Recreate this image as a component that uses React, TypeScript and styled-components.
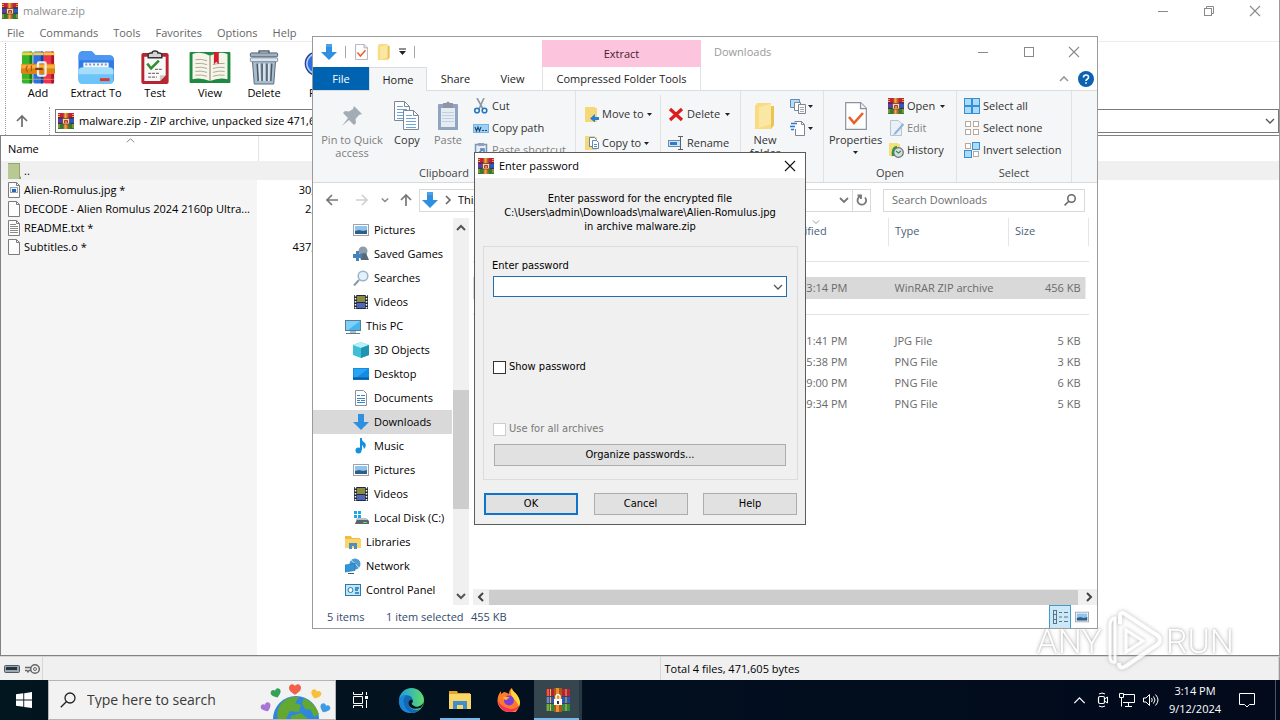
import React from "react";
import styled, { createGlobalStyle, css } from "styled-components";

const Global = createGlobalStyle`
  *, *::before, *::after { box-sizing: border-box; }
  html, body, #root { height: 100%; }
  body { margin: 0; overflow: hidden; background: #fff; color: #000;
    font: 11px/16px "Open Sans", "Noto Sans", sans-serif; }
  button { font: inherit; color: inherit; background: none; border: 0; padding: 0; margin: 0; }
  input { font: inherit; color: inherit; margin: 0; }
  svg { display: block; flex: none; }
  table { border-collapse: collapse; border-spacing: 0; table-layout: fixed; }
  th, td { padding: 0; font-weight: 400; text-align: left; white-space: nowrap; }
`;

/* ---------- icons ---------- */

const Svg = ({ w = 16, h = 16, box, children }: { w?: number; h?: number; box?: string; children: React.ReactNode }) => (
  <svg width={w} height={h} viewBox={box ?? `0 0 ${w} ${h}`} fill="none" aria-hidden="true">{children}</svg>
);

const RarIcon = ({ size = 16 }: { size?: number }) => (
  <Svg w={size} h={size} box="0 0 16 16">
    <rect x="0" y="0" width="16" height="5" fill="#c3223c" />
    <rect x="0" y="5" width="16" height="5.5" fill="#5a3fa0" />
    <rect x="0" y="10.5" width="16" height="5.5" fill="#2e7d32" />
    <rect x="10" y="5" width="6" height="5" fill="#2f58c4" />
    <path d="M0 5h16M0 10.4h16" stroke="#231a2c" strokeWidth=".8" />
    <path d="M0 1.5h2M0 3.5h2M14 1.5h2M14 3.5h2M0 12h2M0 14h2M14 12h2M14 14h2" stroke="#e8b23c" strokeWidth=".9" />
    <rect x="5.5" y="0" width="5" height="16" fill="#c2641c" />
    <rect x="6.5" y="0" width="2" height="16" fill="#eda84a" />
    <rect x="4.5" y="5.5" width="7" height="5.5" rx="1" fill="#e6d9cf" stroke="#7a3a12" strokeWidth=".8" />
    <path d="M6.5 10V7.5h3V10M8 7v3" stroke="#b33a1a" strokeWidth="1" />
  </Svg>
);

const RarBooks = () => (
  <Svg w={34} h={34} box="0 0 36 36">
    {[["#35b52c", "#1c7d1c", 1], ["#2f6fe0", "#1a3fa5", 13], ["#ee3350", "#b3122c", 24]].map(([a, b, x]) => (
      <g key={x as number}>
        <rect x={x as number} y="1" width="11" height="34" rx="2" fill={a as string} />
        <rect x={(x as number) + 8} y="1" width="3" height="34" rx="1" fill={b as string} />
        <path d={`M${x} 3.5h11`} stroke="#f3cf4c" strokeWidth="3" />
        <path d={`M${x} 30.5h11`} stroke="#f3cf4c" strokeWidth="1" opacity=".6" />
      </g>
    ))}
    <rect x="0" y="14" width="36" height="11" rx="2" fill="#e07f14" />
    <rect x="0" y="15" width="36" height="4" fill="#f6ae3c" />
    <rect x="18" y="12.5" width="8" height="14" rx="1" stroke="#f3efe8" strokeWidth="2.4" />
    <path d="M15 19.500h8" stroke="#7d3f0b" strokeWidth="2.4" />
    <path d="M7 16q-3 3 0 7M11 16v6" stroke="#a95a0c" strokeWidth="1.3" />
  </Svg>
);

const FolderBig = () => (
  <Svg w={38} h={36}>
    <path d="M1 6q0-5 5-5h7q2 0 3.500 2l2 2.500h14q5 0 5 5V30q0 4-5 4H6q-5 0-5-4z" fill="#2f7be6" />
    <path d="M1 8q0-7 5-7h7q2 0 3.500 2l2 2.500h14q4 0 5 5H1z" fill="#4d97f2" />
    <rect x="6" y="13" width="26" height="10" fill="#f4f8fc" />
    <path d="M8 15h22" stroke="#7f98b4" strokeWidth="2" strokeDasharray="2 2" />
    <path d="M1 22q0-4 4-4h28q4 0 4 4v9q0 4-5 4H6q-5 0-5-4z" fill="#6cc4f8" />
    <path d="M1 22q0-4 4-4h28q4 0 4 4v3H1z" fill="#a4defc" />
    <rect x="23" y="29" width="10" height="3" fill="#d93a2b" />
  </Svg>
);

const TestBig = () => (
  <Svg w={30} h={36}>
    <rect x="1" y="3" width="28" height="32" rx="2" fill="#b72531" />
    <path d="M4 7h22v19l-6 6H4z" fill="#fafafa" />
    <path d="M20 32v-6h6z" fill="#c9c9c9" />
    <path d="M8 8V5q0-2 3-2h1q0-2 3-2t3 2h1q3 0 3 2v3z" fill="#d5d5d5" stroke="#333" strokeWidth="1.5" />
    <path d="M7 14l4 5 8-8" stroke="#2f8f2f" strokeWidth="2.6" />
    <path d="M15 20h8M8 24h11M8 28h9" stroke="#777" strokeWidth="1.3" strokeDasharray="3 1" />
  </Svg>
);

const ViewBig = () => (
  <Svg w={42} h={36}>
    <rect x="0" y="2" width="42" height="32" rx="1" fill="#1d8a41" />
    <path d="M3 4q9-3 18 2 9-5 18-2v26q-9-2-18 2-9-4-18-2z" fill="#f7f5ea" />
    <path d="M21 6v26" stroke="#a5a08c" strokeWidth="1.5" />
    <path d="M6 10q6-1 12 1M6 14q6-1 12 1M6 18q6-1 12 1M6 22q6-1 12 1M6 26q6-1 12 1M24 15q6-2 12-1M24 19q6-2 12-1M24 23q6-2 12-1M24 27q6-2 12-1" stroke="#aaa797" strokeWidth="1" />
    <path d="M25 2h5v13l-2.500-3L25 15z" fill="#d0202e" />
  </Svg>
);

const TrashBig = () => (
  <Svg w={32} h={36}>
    <path d="M11 4V1h10v3" stroke="#555f6a" strokeWidth="1.6" />
    <rect x="2" y="3" width="28" height="4" rx="1" fill="#9fb1c2" stroke="#4f5d6b" />
    <path d="M4 10h24l-2 25H6z" fill="#a9bccd" stroke="#5a6978" />
    <rect x="2" y="8" width="28" height="4" rx="1" fill="#dbe5ee" stroke="#66768a" strokeWidth=".8" />
    <path d="M9 14l1 18M14 14v18M19 14v18M24 14l-1 18" stroke="#4a5866" strokeWidth="1.5" />
    <path d="M11 14l1 18M16 14v18M21 14v18" stroke="#e3ecf4" strokeWidth="1.5" />
  </Svg>
);

const FindBig = () => (
  <Svg w={36} h={36}>
    <circle cx="15" cy="14" r="12" fill="#2c6fe0" stroke="#24418f" strokeWidth="1.5" />
    <circle cx="15" cy="14" r="10.5" stroke="#b8d0f4" strokeWidth="1.5" />
    <path d="M24 23l9 9" stroke="#444" strokeWidth="4" />
  </Svg>
);

const DocIcon = ({ kind }: { kind: string }) =>
  kind === "up" ? (
    <Svg w={13} h={16}>
      <rect width="12" height="16" fill="#b9c993" /><path d="M11.500 1v15M0 .5h12" stroke="#93a66c" /><path d="M11 12l2 2v2h-2z" fill="#93a66c" />
    </Svg>
  ) : (
    <Svg w={13} h={16}>
      <path d="M.5.5h8l3 3v12H.5z" fill="#fdfdfd" stroke="#7c7c7c" /><path d="M8.500.5v3h3" stroke="#7c7c7c" />
      {kind === "img" && <><rect x="2.5" y="5.5" width="7" height="5" fill="#e8f2fb" stroke="#9aa" /><rect x="4" y="7" width="4" height="3" fill="#2467b5" /></>}
      {kind === "txt" && <path d="M2 4.500h6M2 6.500h8M2 8.500h8M2 10.500h8M2 12.500h8" stroke="#8a8a8a" />}
    </Svg>
  );

const Chevron = ({ dir = "down", size = 10, color = "#444", weight = 1.3 }: { dir?: "down" | "up" | "left" | "right"; size?: number; color?: string; weight?: number }) => {
  const d = { down: "M1 3l4 4 4-4", up: "M1 7l4-4 4 4", left: "M7 1L3 5l4 4", right: "M3 1l4 4-4 4" }[dir];
  return <Svg w={size} h={size} box="0 0 10 10"><path d={d} stroke={color} strokeWidth={weight} /></Svg>;
};

const Arrow = ({ dir, color = "#6e6e6e" }: { dir: "left" | "right" | "up"; color?: string }) => {
  const d = { left: "M13 7H2M7 2L2 7l5 5", right: "M1 7h11M7 2l5 5-5 5", up: "M7 13V2M2 7l5-5 5 5" }[dir];
  return <Svg w={14} h={14}><path d={d} stroke={color} strokeWidth="1.7" /></Svg>;
};

const Caret = () => <Svg w={5} h={3}><path d="M0 0h5L2.500 3z" fill="#222" /></Svg>;
const DownArrow = () => <Svg><path d="M5 0h6v8h5l-8 8-8-8h5z" fill="#2f8fe0" /><path d="M5 0h6v3H5z" fill="#4aa3ea" /></Svg>;

const WinGlyph = ({ kind, color = "#8a8a8a" }: { kind: "min" | "restore" | "max" | "close"; color?: string }) => (
  <Svg w={12} h={12}>
    {kind === "min" && <path d="M1 6.500h10" stroke={color} />}
    {kind === "max" && <rect x="1.5" y="1.5" width="9" height="9" stroke={color} />}
    {kind === "restore" && <><rect x="1.5" y="3.5" width="7" height="7" stroke={color} /><path d="M3.500 3V1.500h7v7H9" stroke={color} /></>}
    {kind === "close" && <path d="M1 1l10 10M11 1L1 11" stroke={color} strokeWidth="1.1" />}
  </Svg>
);

const CheckDoc = ({ w = 14, h = 16 }: { w?: number; h?: number }) => (
  <Svg w={w} h={h} box="0 0 22 28">
    <path d="M.7.7h15l5.600 5.600v21H.7z" fill="#fff" stroke="#8c929a" strokeWidth="1.2" /><path d="M15.500.7v6h6" stroke="#8c929a" strokeWidth="1.2" fill="#eef" />
    <path d="M4 15l5 6 9-10" stroke="#e8612c" strokeWidth="2.6" />
  </Svg>
);

const FolderUp = ({ w = 14, h = 18 }: { w?: number; h?: number }) => (
  <Svg w={w} h={h} box="0 0 20 26">
    <path d="M2 0h14v3h3v19l-3 4H0V3z" fill="#f9dc82" /><path d="M4 4l12-3v20L4 25z" fill="#fbe7a4" /><path d="M16 3h3v19l-3 4z" fill="#ecc356" />
  </Svg>
);

const PinIcon = () => <Svg w={24} h={24}><path d="M14 2l8 8-3 1-3.500 4 .5 4-2 2-5-5-7 6 6-8-5-5 2-2 4 .5L13 5z" fill="#a3acb5" /></Svg>;
const CopyIcon = () => (
  <Svg w={26} h={30}>
    {[[0, 0], [9, 9]].map(([x, y]) => (
      <g key={x} transform={`translate(${x} ${y})`}>
        <path d="M.5.5h10l5 5v14H.5z" fill="#fff" stroke="#7d8793" /><path d="M10.500.5v5h5" stroke="#7d8793" />
        <path d="M3 5.500h6M3 8.500h10M3 11.500h10M3 14.500h10M3 17.500h10" stroke="#6ba4dc" />
      </g>
    ))}
  </Svg>
);
const PasteIcon = () => (
  <Svg w={22} h={30}>
    <rect x="1" y="3" width="20" height="26" rx="1" fill="#8ea4c0" /><rect x="4" y="7" width="14" height="19" fill="#e6ecf3" />
    <path d="M6 2h3q2-3 4 0h3v5H6z" fill="#8d96a1" /><path d="M5 11.500h12M5 14.500h12M5 17.500h12M5 20.500h12" stroke="#c3cfdd" />
  </Svg>
);
const CutIcon = () => <Svg><path d="M4 0l6 11M11 0L6 11" stroke="#8a97a6" strokeWidth="1.6" /><circle cx="4" cy="12.5" r="2.3" stroke="#2277c2" strokeWidth="1.6" /><circle cx="11.5" cy="12.5" r="2.3" stroke="#2277c2" strokeWidth="1.6" /></Svg>;
const PathIcon = () => <Svg><rect x=".5" y="4.5" width="15" height="8" fill="#9fd0f6" stroke="#72b2e4" /><path d="M2 7l1.500 4L5 7l1.500 4L8 7M9 10.500h2M12 10.500h2" stroke="#18466f" strokeWidth="1.1" /></Svg>;
const ShortcutIcon = () => <Svg><rect x="2.5" y="2.5" width="11" height="13" fill="#e6edf5" stroke="#7d95b3" strokeWidth="1.5" /><rect x="5" y="1" width="6" height="3" fill="#8ba0bb" /><path d="M6 13q0-4 4-5M7 7h4v4" stroke="#5f84b4" strokeWidth="1.5" /></Svg>;
const MoveIcon = () => <Svg><path d="M0 1h10v1h2v14H0z" fill="#f6d878" /><path d="M14 11h-4V8l-5 4.500 5 4V14h4z" fill="#2a7fd0" /></Svg>;
const CopyToIcon = () => <Svg><path d="M0 1h10v1h2v13H0z" fill="#f6d878" /><path d="M4.500 2.500h5l2 2v7h-7z" fill="#fff" stroke="#5d87b8" /><path d="M7.500 5.500h4l2 2v6h-6z" fill="#fff" stroke="#5d87b8" /><path d="M9 9.500h3M9 11.500h3" stroke="#5d87b8" /></Svg>;
const XIcon = () => <Svg w={16}><path d="M2 3l12 11M14 3L2 14" stroke="#dc1c1c" strokeWidth="3.2" /></Svg>;
const RenameIcon = () => <Svg><rect x=".5" y="5.5" width="12" height="6" fill="#cfe5f8" stroke="#6f8aa8" /><rect x="2" y="7" width="7" height="3" fill="#2b7ccc" /><path d="M12.500 2v12M10 1.500h5M10 14.500h5" stroke="#59636e" /></Svg>;
const NewItemIcon = () => <Svg w={17} h={17}><path d="M.5 1.500h9v8h-9z" fill="#b6dbf6" stroke="#5d8fb9" /><path d="M4.500 4.500h6v8h-6z" fill="#fff" stroke="#7d8793" /><path d="M8.500 6.500h7v9h-7z" fill="#f7f9fb" stroke="#7d8793" /><path d="M10 9.500h4M10 11.500h4M10 13.500h4" stroke="#aaa" /></Svg>;
const EasyIcon = () => <Svg w={17} h={17}><path d="M4.500 1.500h7l3 3v11h-9V9" fill="#fff" stroke="#7d8793" /><path d="M11.500 1.500v3h3" stroke="#7d8793" /><path d="M1 3.500h6M0 6.500h5M1 9.500h3" stroke="#2b7ccc" strokeWidth="1.4" /></Svg>;
const EditIcon = () => <Svg><path d="M2.500.5h8l3 3v12h-11z" fill="#e9f0f8" stroke="#b7c3d1" /><path d="M15 3L7 12l-2 3 3-1 8-9z" fill="#8fb3d8" /></Svg>;
const HistoryIcon = () => <Svg><path d="M1 1h9v1h2v12H1z" fill="#f6e07c" /><path d="M5 14q-1-8 4-9" stroke="#2a9b3c" strokeWidth="2.5" /><circle cx="10.5" cy="10.5" r="4.8" fill="#d6dde0" stroke="#64727a" strokeWidth="1.2" /><path d="M8 9l2.500 2L13 9" stroke="#3b8f45" strokeWidth="1.2" /></Svg>;
const SelIcon = ({ on }: { on: boolean[] }) => (
  <Svg>
    {on.map((v, i) => {
      const x = (i % 2) * 8 + (v ? 0.5 : 1.5), y = Math.floor(i / 2) * 8 + (v ? 0.5 : 1.5), s = v ? 7 : 5;
      return <rect key={i} x={x} y={y} width={s} height={s} fill={v ? "#a9dcfb" : "#fff"} stroke={v ? "#3a8fd0" : "#b7a99c"} />;
    })}
  </Svg>
);
const HelpIcon = () => <Svg><circle cx="8" cy="8" r="8" fill="#0b62b0" /><path d="M5.500 6.500q0-2.500 2.500-2.500t2.500 2.200q0 1.300-1.400 2-1.100.6-1.100 1.800M8 11.200v1.600" stroke="#fff" strokeWidth="1.6" /></Svg>;
const Magnifier = ({ size = 13, color = "#666", weight = 1.6 }: { size?: number; color?: string; weight?: number }) => (
  <Svg w={size} h={size} box="0 0 16 16"><circle cx="10" cy="6" r="5" stroke={color} strokeWidth={weight} /><path d="M6.300 9.700L.8 15.200" stroke={color} strokeWidth={weight} /></Svg>
);

const navIcons: Record<string, React.ReactNode> = {
  pictures: <><rect x=".5" y="2.5" width="15" height="11" fill="#fff" stroke="#9aa3ab" /><rect x="2" y="4" width="12" height="8" fill="#8fc4ee" /><path d="M2 9l4-1 4 1 4-1v4H2z" fill="#2f5f86" /></>,
  games: <><circle cx="10" cy="5" r="4.5" fill="#8b9cac" /><path d="M6 8l7-1 3 7H8z" fill="#56697b" /><path d="M3 5h3v3h3v4H6v3H3v-3H0V8h3z" fill="#4582b8" /></>,
  searches: <><circle cx="10" cy="6" r="4.8" fill="#e3f1fb" stroke="#9cb3c8" strokeWidth="1.5" /><path d="M6 10l-5 5.500" stroke="#8b98a5" strokeWidth="2" /></>,
  videos: <><rect x="1" y="1" width="14" height="14" fill="#222a38" /><rect x="4" y="2" width="8" height="6" fill="#8c8a3c" /><rect x="4" y="9" width="8" height="5" fill="#4e66b8" /><path d="M2.500 1v14M13.500 1v14" stroke="#fff" strokeWidth="1.5" strokeDasharray="1.5 1.5" /></>,
  pc: <><rect x=".5" y="2.5" width="15" height="10" fill="#48b5ef" stroke="#5b7d94" /><path d="M1 3h14L3 12H1z" fill="#7fd0f8" /><path d="M1 15.500h14M5 14h6" stroke="#5b7d94" /></>,
  cube: <><path d="M8 0l8 3v10l-8 3-8-3V3z" fill="#3cc0d8" /><path d="M8 0l8 3-8 3-8-3z" fill="#b9f0f6" /><path d="M8 6l8-3v10l-8 3z" fill="#1f93b0" /></>,
  desktop: <><rect x="0" y="2" width="16" height="12" fill="#128de4" /><path d="M0 12.500h16" stroke="#0a5aa0" strokeWidth="2" /><path d="M1 3h14L4 11H1z" fill="#2ba4f4" /></>,
  documents: <><path d="M2.500.5h8l3 3v12h-11z" fill="#fff" stroke="#8a939b" /><path d="M4 5.500h3M8 5.500h4M4 8.500h8M4 10.500h3M8 10.500h4M4 12.500h8" stroke="#3a86c8" /></>,
  downloads: <><path d="M5 0h6v8h5l-8 8-8-8h5z" fill="#2f8fe0" /></>,
  music: <><path d="M8 0v12" stroke="#1590e0" strokeWidth="2" /><circle cx="5.5" cy="12.5" r="3" fill="#1590e0" /><path d="M8 0q1 3 4 5 2 3-1 6 0-3-3-5z" fill="#1590e0" /></>,
  disk: <><path d="M1 1h3v3H1zM5 1h3v3H5zM1 5h3v3H1zM5 5h3v3H5z" fill="#1aa7e8" /><path d="M4 9h10l2 2v3H2z" fill="#5b646c" /><path d="M4 8h9l2 2H3z" fill="#b9c1c7" /><rect x="10" y="12" width="4" height="1" fill="#5ee35a" /></>,
  libraries: <><path d="M0 2h6l1 2h8v10H0z" fill="#f2bc3f" /><path d="M0 5h16v9H0z" fill="#fbd56a" /><path d="M4 15V9h8v6h-3v-3H7v3z" fill="#4d8fc4" /></>,
  network: <><circle cx="10" cy="6" r="5.5" fill="#4f9ad1" /><path d="M6 2q5 4 8 8" stroke="#b9def5" /><path d="M0 7l10-1.500v7L0 14z" fill="#2f98dd" stroke="#2b6897" strokeWidth=".6" /><path d="M3 15.500h6" stroke="#456" /></>,
  control: <><rect x=".5" y="2.5" width="15" height="11" fill="#c4e6fa" stroke="#2b7aa8" /><circle cx="5.5" cy="8" r="2.5" fill="#fff" stroke="#1b7f9e" /><path d="M10 6h4M10 8h3M10 11h4" stroke="#1b74b0" strokeWidth="1.3" /></>,
};

/* ---------- shared pieces ---------- */

const Screen = styled.div`height: 100%; min-height: 640px; display: flex; flex-direction: column; position: relative; overflow: hidden;`;
const Desk = styled.div`flex: 1; min-height: 0; position: relative; display: flex; flex-direction: column;`;
const Spacer = styled.div`flex: 1;`;
const CaptionButton = styled.button<{ $w?: number }>`
  width: ${p => p.$w ?? 46}px; align-self: stretch; display: flex; align-items: center; justify-content: center;
`;
const Divider = styled.span`width: 1px; height: 12px; background: #a5a5a5;`;
const Col = styled.col<{ $w?: number }>`${p => p.$w && css`width: ${p.$w}px;`}`;

/* ---------- archiver window ---------- */

const Archiver = styled.main`flex: 1; min-height: 0; display: flex; flex-direction: column; background: #fff; border-right: 1px solid #999;`;
const ArcTitle = styled.header`height: 24px; padding: 0 1px 3px 2px; display: flex; align-items: center; color: #8e8e8e;`;
const ArcName = styled.span`padding-left: 5px;`;
const MenuBar = styled.nav`height: 18px; padding-left: 7px; display: flex; align-items: center; gap: 15px; color: #666; border-bottom: 1px solid #ececec;`;
const Tools = styled.div`height: 64px; padding-left: 5px; display: flex;`;
const Grip = styled.span`width: 0; align-self: stretch; border-left: 1px dotted #a0a0a0; margin-top: 1px;`;
const ToolButton = styled.button<{ $w: number }>`
  width: ${p => p.$w}px; padding-top: 8px; display: flex; flex-direction: column; align-items: center; white-space: nowrap;
  &:nth-of-type(1) { margin-left: 4px; } svg { height: 35px; }
`;
const PathRow = styled.div`height: 29px; padding-left: 5px; display: flex; align-items: center; gap: 5px;`;
const UpButton = styled.button`width: 22px; margin-right: 11px; display: flex; justify-content: center;`;
const PathBox = styled.label`
  flex: 1; height: 24px; padding: 0 3px 0 2px; border: 1px solid #7a7a7a; display: flex; align-items: center; gap: 5px;
  input { flex: 1; min-width: 0; border: 0; outline: 0; padding: 0; background: none; }
`;
const FileArea = styled.section`
  flex: 1; min-height: 0; border: solid #828282; border-width: 1px 0 1px 1px; display: flex;
  background: linear-gradient(to right, #f5f5f5 256px, #fff 256px);
`;
const ArcTable = styled.table`
  width: 100%; height: max-content;
  th { height: 25px; background: #fff; padding: 1px 0 0 7px; border-right: 1px solid #e5e5e5; position: relative; }
  th svg { position: absolute; top: 0; left: 125px; }
  th:last-child { border: 0; }
  td { height: 19px; }
  td:first-child { padding-left: 7px; }
  td:nth-child(2) { text-align: right; padding-right: 4px; }
`;
const ArcRow = styled.tr<{ $sel?: boolean }>`background: ${p => (p.$sel ? "#f0f0f0" : "transparent")};`;
const NameCell = styled.span`display: flex; align-items: center; gap: 3px;`;
const StatusBar = styled.footer`height: 24px; display: flex; align-items: center; background: #f0f0f0; border-top: 1px solid #d5d5d5; border-right: 1px solid #999;`;
const StatusPart = styled.div<{ $w?: number }>`
  ${p => (p.$w ? css`width: ${p.$w}px;` : css`flex: 1;`)}
  height: 100%; display: flex; align-items: center; gap: 4px; padding-left: 4px; border-right: 1px solid #d7d7d7;
`;
const StatusHalf = styled.div`width: calc(50% + 21px); height: 100%; display: flex; border-right: 1px solid #d7d7d7;`;

const archiveFiles = [
  ["up", "..", ""], ["img", "Alien-Romulus.jpg *", "30,962"], ["doc", "DECODE - Alien Romulus 2024 2160p Ultra...", "2,914"],
  ["txt", "README.txt *", "1"], ["doc", "Subtitles.o *", "437,728"],
];

/* ---------- explorer window ---------- */

const Explorer = styled.section`
  position: absolute; left: 312px; right: 182px; top: 36px; bottom: 51px; display: flex; flex-direction: column;
  background: #fff; border: 1px solid #9b9b9b; overflow: hidden; color: #222;
`;
const ExTitle = styled.header`height: 30px; flex: none; display: flex; align-items: center;`;
const Quick = styled.div`width: 229px; height: 100%; padding-left: 8px; display: flex; align-items: center; gap: 8px;`;
const Context = styled.div`width: 159px; height: 27px; align-self: flex-end; background: #fcc4dd; color: #4a1a32; display: flex; align-items: center; justify-content: center;`;
const ExCaption = styled.h1`margin: 0; font-size: 11px; line-height: 16px; font-weight: 400; color: #999; padding-left: 13px; flex: 1;`;
const Tabs = styled.nav`height: 24px; flex: none; display: flex; border-bottom: 1px solid #dcdde0;`;
const Tab = styled.button<{ $kind?: "file" | "on" | "wide" }>`
  width: 57px; height: 24px;
  ${p => p.$kind === "file" && css`width: 56px; background: #0063b1; color: #fff; height: 23px;`}
  ${p => p.$kind === "on" && css`width: 58px; background: #f5f6f7; border: 1px solid #dcdde0; border-bottom: 0;`}
  ${p => p.$kind === "wide" && css`width: 159px; margin-left: 1px; border: solid #dfe3e4; border-width: 0 1px; height: 23px;`}
`;
const TabEnd = styled.div`flex: 1; display: flex; align-items: center; justify-content: flex-end; gap: 9px; padding-right: 3px;`;
const Ribbon = styled.div`height: 92px; flex: none; display: flex; background: #f5f6f7; border-bottom: 1px solid #d8d9db;`;
const Group = styled.section<{ $w: number }>`width: ${p => p.$w}px; flex: none; padding: 4px 0 1px; border-right: 1px solid #e0e1e3; display: flex; flex-direction: column;`;
const GroupBody = styled.div`flex: 1; display: flex; min-height: 0;`;
const GroupName = styled.h2`margin: 0; font-size: 11px; line-height: 16px; font-weight: 400; color: #444; text-align: center;`;
const BigButton = styled.button<{ $w: number; $dim?: boolean }>`
  width: ${p => p.$w}px; flex: none; padding-top: 4px; display: flex; flex-direction: column; align-items: center; line-height: 13px;
  color: ${p => (p.$dim ? "#7d7d7d" : "#333")}; white-space: nowrap;
`;
const BigPic = styled.span`height: 34px; flex: none; display: flex; align-items: center;`;
const SmallCol = styled.div<{ $left?: number }>`padding-left: ${p => p.$left ?? 0}px; display: flex; flex-direction: column;`;
const PairCol = styled.div`
  width: 85px; flex: none; height: 84px; padding: 8px 0 0 9px; display: flex; flex-direction: column; gap: 7px; border-right: 1px solid #e0e1e3;
  &:last-child { border: 0; padding-left: 7px; }
`;
const SmallButton = styled.button<{ $dim?: boolean; $tight?: boolean }>`
  height: 22px; display: flex; align-items: center; gap: ${p => (p.$tight ? 1 : 3)}px; white-space: nowrap; color: ${p => (p.$dim ? "#838383" : "#333")};
`;
const CaretSlot = styled.span<{ $below?: boolean }>`padding: ${p => (p.$below ? "5px 0 0" : "0 0 0 2px")};`;
const AddressRow = styled.div`height: 34px; flex: none; display: flex; align-items: center; padding: 0 12px 0 4px;`;
const NavGlyph = styled.button<{ $w: number }>`width: ${p => p.$w}px; height: 22px; display: flex; align-items: center; justify-content: center;`;
const AddressBox = styled.div`
  flex: 1; height: 23px; margin-right: 12px; border: 1px solid #d9d9d9; display: flex; align-items: center; justify-content: space-between; color: #000;
`;
const Crumbs = styled.div`display: flex; align-items: center; gap: 5px; padding-left: 2px;`;
const BoxEnd = styled.div`display: flex; align-items: center; gap: 3px; height: 100%;`;
const RefreshButton = styled.button`width: 18px; height: 100%; border-left: 1px solid #d9d9d9; display: flex; align-items: center; justify-content: center;`;
const SearchBox = styled.label`
  width: 202px; height: 23px; border: 1px solid #d9d9d9; display: flex; align-items: center; padding: 0 8px;
  input { flex: 1; min-width: 0; border: 0; outline: 0; padding: 0; background: none; }
  input::placeholder { color: #6d6d6d; opacity: 1; }
`;
const Body = styled.div`flex: 1; min-height: 0; display: flex; padding-top: 1px;`;
const Tree = styled.nav`width: 139px; overflow: hidden; color: #000;`;
const TreeItem = styled.button<{ $top?: boolean; $on?: boolean }>`
  width: 100%; height: 24px; padding-left: ${p => (p.$top ? 32 : 40)}px; display: flex; align-items: center; gap: 5px; white-space: nowrap;
  background: ${p => (p.$on ? "#d9d9d9" : "transparent")};
`;
const VScroll = styled.div`width: 16px; margin-left: 1px; background: #f0f0f0; display: flex; flex-direction: column; align-items: center; padding: 5px 0 4px;`;
const VTrack = styled.div`flex: 1; width: 100%; display: flex; flex-direction: column;`;
const VGap = styled.div<{ $n: number }>`flex: ${p => p.$n};`;
const VThumb = styled.div`flex: 119; background: #cdcdcd;`;
const Pane = styled.div`flex: 1; min-width: 0; display: flex; flex-direction: column; margin-left: 4px;`;
const ExTable = styled.table`
  width: calc(100% - 8px); color: #6a6a6a;
  th { height: 28px; color: #4c607a; padding: 0 0 2px 6px; border-right: 1px solid #e5e5e5; position: relative; }
  th svg { position: absolute; top: 0; left: 64px; }
  td { height: 21px; padding-left: 6px; }
  td:nth-child(4) { text-align: right; padding-right: 8px; }
`;
const SelRow = styled.tr`background: linear-gradient(#d9d9d9, #d9d9d9) no-repeat; background-size: calc(100% - 4px) 100%; td { height: 22px; }`;
const GroupCell = styled.td`&& { height: 31px; padding: 0; }`;
const GroupLine = styled.div`height: 1px; background: #e2e2e2;`;
const HScroll = styled.div`height: 16px; margin-top: auto; background: #f0f0f0; display: flex; align-items: center; justify-content: space-between; padding: 0 3px;`;
const HThumb = styled.div`flex: 1; height: 15px; margin: 0 6px 0 3px; background: #cdcdcd;`;
const ExStatus = styled.footer`height: 23px; flex: none; padding: 0 4px 0 14px; display: flex; align-items: center; color: #2f4a6b;`;
const StatusText = styled.span<{ $w?: number }>`width: ${p => (p.$w ? p.$w + "px" : "auto")}; white-space: nowrap;`;
const ViewButton = styled.button<{ $on?: boolean }>`
  width: 22px; height: 24px; display: flex; align-items: center; justify-content: center;
  ${p => p.$on && css`background: #cce8f6; border: 1px solid #3f9bd0;`}
`;

const tree: [string, string, boolean?][] = [
  ["pictures", "Pictures"], ["games", "Saved Games"], ["searches", "Searches"], ["videos", "Videos"], ["pc", "This PC", true],
  ["cube", "3D Objects"], ["desktop", "Desktop"], ["documents", "Documents"], ["downloads", "Downloads"], ["music", "Music"],
  ["pictures", "Pictures"], ["videos", "Videos"], ["disk", "Local Disk (C:)"], ["libraries", "Libraries", true],
  ["network", "Network", true], ["control", "Control Panel", true],
];
const earlier = [["1:41 PM", "JPG File", "5 KB"], ["5:38 PM", "PNG File", "3 KB"], ["9:00 PM", "PNG File", "6 KB"], ["9:34 PM", "PNG File", "5 KB"]];
const DateCell = styled.td`&& { text-align: right; padding: 0 41px 0 0; }`;

/* ---------- password dialog ---------- */

const Dialog = styled.section`
  position: absolute; left: calc(50% - 166px); top: 152px; width: 332px; border: 1px solid #5c5c5c; background: #f0f0f0; color: #000;
  font: 11px/14px "DejaVu Sans Condensed", "Open Sans", sans-serif;
`;
const DlgTitle = styled.header`height: 25px; background: #fff; padding-left: 3px; display: flex; align-items: center; gap: 5px; font: 11px/16px "Open Sans", sans-serif;`;
const DlgText = styled.p`margin: 0; padding: 14px 0 12px; text-align: center;`;
const Frame = styled.div`margin: 0 7px 0 8px; height: 234px; border: 1px solid #dcdcdc; padding: 12px 10px 0 8px; display: flex; flex-direction: column;`;
const Combo = styled.div`
  height: 21px; margin: 3px 0 0 1px; background: #fff; border: 1px solid #1c6fb4; display: flex; align-items: center;
  input { flex: 1; min-width: 0; border: 0; outline: 0; background: none; padding: 0 3px; }
  button { width: 17px; display: flex; justify-content: center; }
`;
const Check = styled.label<{ $dim?: boolean; $top: number }>`
  display: flex; align-items: center; gap: 3px; height: 14px; margin: ${p => p.$top}px 0 0 1px; color: ${p => (p.$dim ? "#787878" : "#000")};
  input { appearance: none; width: 13px; height: 13px; background: #fff; border: 1px solid ${p => (p.$dim ? "#ccc" : "#333")}; }
`;
const DlgButton = styled.button<{ $main?: boolean }>`
  height: 22px; background: #e1e1e1; border: ${p => (p.$main ? "2px solid #0f74cc" : "1px solid #adadad")};
`;
const Organize = styled(DlgButton)`margin: 8px 1px 0 2px;`;
const DlgActions = styled.div`display: flex; justify-content: space-between; padding: 13px 8px 9px 9px; ${DlgButton} { width: 94px; }`;

/* ---------- watermark and taskbar ---------- */

const Mark = styled.div`
  position: absolute; right: 46px; bottom: 48px; height: 62px; display: flex; align-items: center; gap: 4px; pointer-events: none; color: #fff; opacity: .85;
  font: 300 34px/62px Roboto, "Open Sans", sans-serif; text-shadow: 0 0 2px #a0a0a0, 0 0 4px #b0b0b0;
  svg { filter: drop-shadow(0 0 2px #b0b0b0); }
`;
const Taskbar = styled.footer`height: 40px; flex: none; display: flex; background: linear-gradient(to right, #02161f, #020f1f 50%, #020a1c); color: #fff;`;
const TaskButton = styled.button<{ $w: number; $line?: number; $on?: boolean }>`
  width: ${p => p.$w}px; height: 40px; display: flex; align-items: center; justify-content: center;
  ${p => p.$line && css`background: linear-gradient(#76b9ed, #76b9ed) center bottom / ${p.$line}px 2px no-repeat;`}
  ${p => p.$on && css`background-color: #35464f; border-right: 3px solid #263943; padding-left: 2px;`}
`;
const TaskSearch = styled.label`
  width: 288px; height: 40px; background: #f2f2f2; border: 1px solid #b5b5b5; display: flex; align-items: center; gap: 11px; padding-left: 11px; font-size: 14px;
  input { border: 0; outline: 0; padding: 0; background: none; flex: 1; min-width: 0; }
  input::placeholder { color: #3a3a3a; opacity: 1; }
`;
const Tray = styled.div`display: flex; align-items: center; padding-right: 4px;`;
const TrayButton = styled.button<{ $w?: number }>`width: ${p => p.$w ?? 24}px; height: 40px; display: flex; align-items: center; justify-content: center;`;
const Clock = styled.time`width: 64px; text-align: center; line-height: 18px;`;
const TrayEdge = styled.span`width: 5px; height: 40px; border-left: 1px solid #4b5563;`;

const heart = "M0 6C-6 2-7 0-6-3-4-6-1-5 0-3 1-5 4-6 6-3 7 0 6 2 0 6z";
const Globe = () => (
  <Svg w={78} h={38}>
    <circle cx="39" cy="38" r="23" fill="#2f86dd" />
    <path d="M22 26q7-12 20-10l-4 6 6 2-2 7-9-1-4 8-8 0q-2-6 1-12zM47 17q11 5 15 16l-5 3-3-7-6-1-3-6zM34 35l10-3 7 6H34z" fill="#63a832" />
    {[[19, 12, "#34a05a", -20], [38, 8, "#f2604a", 0], [59, 13, "#f8bf3c", 20], [9, 26, "#a874d6", -25], [68, 27, "#3f9be6", 25]].map(([x, y, c, r]) => (
      <path key={x as number} d={heart} fill={c as string} transform={`translate(${x} ${y}) rotate(${r}) scale(${x === 38 ? 0.95 : 0.8})`} />
    ))}
  </Svg>
);

const EdgeLogo = () => (
  <Svg w={25} h={25} box="0 0 24 24">
    <defs><linearGradient id="eg" x1="0" x2="1"><stop offset="0" stopColor="#1b9de2" /><stop offset="1" stopColor="#5fdc6a" /></linearGradient></defs>
    <circle cx="12" cy="12" r="12" fill="url(#eg)" />
    <path d="M0 12q2-5 7-5 5 0 6 4-4 0-4 4 1 6 8 6 2 0 4-1-4 4-9 4Q0 24 0 12z" fill="#1467b8" />
    <path d="M0 12q2-5 7-5-4 4-2 9 2 6 8 8Q0 24 0 12z" fill="#1a86d4" />
    <path d="M13 11q1 2-1 4 2 3 6 3 4-1 6-5-1 4-3 6-10 3-12-4 0-4 4-4z" fill="#02131e" />
  </Svg>
);
const ExplorerLogo = () => (
  <Svg w={22} h={20}>
    <path d="M0 1h8l1 2h12v6H0z" fill="#e9a12b" /><path d="M0 4h22v15H0z" fill="#fbd567" /><path d="M4 19v-8h14v8h-4v-4H8v4z" fill="#3f8fcd" />
  </Svg>
);
const FirefoxLogo = () => (
  <Svg w={24} h={24}>
    <path d="M12 24A11.500 11.500 0 0 1 .5 12.500C.5 8 2 6 4 3v3l3-2c2 0 3 1 5 2 0-3 1-5 3-6 0 3 3 4 5 7 6 9 0 20-8 20z" fill="#ff7a2a" />
    <path d="M15 0c0 3 3 4 5 7 3 4 4 8 2 12-1-4-4-7-6-9-2-3-3-6-1-10z" fill="#ffd53a" />
    <path d="M1 13c1 7 6 11 12 11 4 0 8-3 10-7-4 4-9 5-13 3-4-1-7-4-9-7z" fill="#f5325f" />
    <circle cx="12" cy="12.5" r="5" fill="#7a3fd6" /><path d="M6 9q4-1 7 1-3 0-3 2-4 0-4-3z" fill="#ffb23a" />
  </Svg>
);
const StackLogo = () => (
  <Svg w={24} h={24}>
    <rect y="1" width="24" height="7" fill="#b8203a" /><rect y="9" width="24" height="6" fill="#2f55b8" /><rect y="16" width="24" height="7" fill="#2e8a3c" />
    <path d="M2 1v7M4.500 1v7M2 9v6M4.500 9v6M2 16v7M4.500 16v7M20 1v7M20 9v6M20 16v7" stroke="#e6b94a" />
    <rect x="8" width="8" height="24" fill="#a8581a" /><rect x="10" width="3" height="24" fill="#e8932e" />
    <rect x="8" y="11" width="8" height="6" fill="#fff" /><path d="M10 11V8q2-3 4 0v3" stroke="#fff" strokeWidth="1.5" /><path d="M11 13h2v3h-2z" fill="#333" />
  </Svg>
);

/* ---------- views ---------- */

const ArchiverWindow = () => (
  <>
    <Archiver>
      <ArcTitle>
        <RarIcon /><ArcName>malware.zip</ArcName><Spacer />
        <CaptionButton aria-label="Minimize"><WinGlyph kind="min" /></CaptionButton>
        <CaptionButton aria-label="Restore"><WinGlyph kind="restore" /></CaptionButton>
        <CaptionButton aria-label="Close"><WinGlyph kind="close" /></CaptionButton>
      </ArcTitle>
      <MenuBar>{["File", "Commands", "Tools", "Favorites", "Options", "Help"].map(m => <button key={m}>{m}</button>)}</MenuBar>
      <Tools>
        <Grip />
        <ToolButton $w={56}><RarBooks />Add</ToolButton>
        <ToolButton $w={60}><FolderBig />Extract To</ToolButton>
        <ToolButton $w={58}><TestBig />Test</ToolButton>
        <ToolButton $w={52}><ViewBig />View</ToolButton>
        <ToolButton $w={56}><TrashBig />Delete</ToolButton>
        <ToolButton $w={56}><FindBig />Find</ToolButton>
      </Tools>
      <PathRow>
        <Grip />
        <UpButton aria-label="Up one level"><Arrow dir="up" /></UpButton>
        <Grip />
        <PathBox>
          <RarIcon />
          <input aria-label="Archive path" readOnly value="malware.zip - ZIP archive, unpacked size 471,605 bytes" />
          <Chevron color="#555" />
        </PathBox>
      </PathRow>
      <FileArea>
        <ArcTable>
          <colgroup><Col $w={257} /><Col $w={79} /><Col /></colgroup>
          <thead><tr><th>Name<Chevron dir="up" size={9} color="#777" weight={1} /></th><th /><th /></tr></thead>
          <tbody>
            {archiveFiles.map(([kind, name, size], i) => (
              <ArcRow key={name} $sel={i === 0}><td><NameCell><DocIcon kind={kind} />{name}</NameCell></td><td>{size}</td><td /></ArcRow>
            ))}
          </tbody>
        </ArcTable>
      </FileArea>
    </Archiver>
    <StatusBar>
      <StatusHalf>
        <StatusPart $w={43}>
          <Svg w={16} h={8}><rect x=".5" y=".5" width="15" height="7" rx="1" fill="#9aa8b0" stroke="#4c5b64" /><rect x="2" y="2" width="11" height="3" fill="#26343c" /></Svg>
          <Svg w={16} h={12}><circle cx="11" cy="6" r="4.3" stroke="#666" strokeWidth="1.5" /><circle cx="11" cy="6" r="1.5" stroke="#666" /><path d="M7 4.500H1M7 7.500H5l-1 1.500-1-1.500H1" stroke="#666" strokeWidth="1.3" /></Svg>
        </StatusPart>
      </StatusHalf>
      <StatusPart>Total 4 files, 471,605 bytes</StatusPart>
    </StatusBar>
  </>
);

const ExplorerWindow = () => (
  <Explorer aria-label="Downloads">
    <ExTitle>
      <Quick>
        <DownArrow /><Divider /><CheckDoc w={15} /><FolderUp w={14} h={16} />
        <Svg w={7} h={8}><path d="M0 1h7" stroke="#222" /><path d="M0 3h7L3.500 7z" fill="#222" /></Svg><Divider />
      </Quick>
      <Context>Extract</Context>
      <ExCaption>Downloads</ExCaption>
      <CaptionButton aria-label="Minimize"><WinGlyph kind="min" /></CaptionButton>
      <CaptionButton $w={45} aria-label="Maximize"><WinGlyph kind="max" /></CaptionButton>
      <CaptionButton aria-label="Close"><WinGlyph kind="close" /></CaptionButton>
    </ExTitle>
    <Tabs>
      <Tab $kind="file">File</Tab><Tab $kind="on">Home</Tab><Tab>Share</Tab><Tab>View</Tab><Tab $kind="wide">Compressed Folder Tools</Tab>
      <TabEnd><Chevron dir="up" color="#999" weight={1.6} /><HelpIcon /></TabEnd>
    </Tabs>
    <Ribbon>
      <Group $w={263}>
        <GroupBody>
          <BigButton $w={78} $dim><BigPic><PinIcon /></BigPic><span>Pin to Quick</span><span>access</span></BigButton>
          <BigButton $w={32}><BigPic><CopyIcon /></BigPic>Copy</BigButton>
          <BigButton $w={50} $dim><BigPic><PasteIcon /></BigPic>Paste</BigButton>
          <SmallCol>
            <SmallButton><CutIcon />Cut</SmallButton>
            <SmallButton><PathIcon />Copy path</SmallButton>
            <SmallButton $dim><ShortcutIcon />Paste shortcut</SmallButton>
          </SmallCol>
        </GroupBody>
        <GroupName>Clipboard</GroupName>
      </Group>
      <Group $w={165}>
        <GroupBody>
          <PairCol>
            <SmallButton $tight><MoveIcon />Move to<CaretSlot><Caret /></CaretSlot></SmallButton>
            <SmallButton $tight><CopyToIcon />Copy to<CaretSlot><Caret /></CaretSlot></SmallButton>
          </PairCol>
          <PairCol>
            <SmallButton><XIcon />Delete<CaretSlot><Caret /></CaretSlot></SmallButton>
            <SmallButton><RenameIcon />Rename</SmallButton>
          </PairCol>
        </GroupBody>
      </Group>
      <Group $w={83}>
        <GroupBody>
          <BigButton $w={48}><BigPic><FolderUp w={20} h={26} /></BigPic><span>New</span><span>folder</span></BigButton>
          <SmallCol $left={1}>
            <SmallButton $tight aria-label="New item"><NewItemIcon /><Caret /></SmallButton>
            <SmallButton $tight aria-label="Easy access"><EasyIcon /><Caret /></SmallButton>
          </SmallCol>
        </GroupBody>
      </Group>
      <Group $w={133}>
        <GroupBody>
          <BigButton $w={63}><BigPic><CheckDoc w={22} h={28} /></BigPic>Properties<CaretSlot $below><Caret /></CaretSlot></BigButton>
          <SmallCol $left={1}>
            <SmallButton><RarIcon />Open<CaretSlot><Caret /></CaretSlot></SmallButton>
            <SmallButton $dim><EditIcon />Edit</SmallButton>
            <SmallButton><HistoryIcon />History</SmallButton>
          </SmallCol>
        </GroupBody>
        <GroupName>Open</GroupName>
      </Group>
      <Group $w={115}>
        <GroupBody>
          <SmallCol $left={7}>
            <SmallButton><SelIcon on={[true, true, true, true]} />Select all</SmallButton>
            <SmallButton><SelIcon on={[false, false, false, false]} />Select none</SmallButton>
            <SmallButton><SelIcon on={[false, true, true, false]} />Invert selection</SmallButton>
          </SmallCol>
        </GroupBody>
        <GroupName>Select</GroupName>
      </Group>
    </Ribbon>
    <AddressRow>
      <NavGlyph $w={30} aria-label="Back"><Arrow dir="left" color="#777" /></NavGlyph>
      <NavGlyph $w={30} aria-label="Forward"><Arrow dir="right" color="#d0d0d0" /></NavGlyph>
      <NavGlyph $w={16} aria-label="Recent"><Chevron size={8} color="#888" weight={1.8} /></NavGlyph>
      <NavGlyph $w={26} aria-label="Up"><Arrow dir="up" color="#777" /></NavGlyph>
      <AddressBox>
        <Crumbs><DownArrow /><Chevron dir="right" size={10} color="#666" weight={1.6} /><span>This PC</span></Crumbs>
        <BoxEnd>
          <Chevron color="#777" weight={1.8} />
          <RefreshButton aria-label="Refresh"><Svg w={12} h={12}><path d="M4 2.500A4.300 4.300 0 1 0 9 3.500M5 5V1.500H1.500" stroke="#777" strokeWidth="1.8" /></Svg></RefreshButton>
        </BoxEnd>
      </AddressBox>
      <SearchBox><input aria-label="Search Downloads" placeholder="Search Downloads" /><Magnifier size={12} weight={2} /></SearchBox>
    </AddressRow>
    <Body>
      <Tree aria-label="Folders">
        {tree.map(([icon, name, top], i) => (
          <TreeItem key={i} $top={top} $on={icon === "downloads"}><Svg>{navIcons[icon]}</Svg>{name}</TreeItem>
        ))}
      </Tree>
      <VScroll>
        <Chevron dir="up" color="#555" weight={2} />
        <VTrack><VGap $n={157} /><VThumb /><VGap $n={82} /></VTrack>
        <Chevron color="#555" weight={2} />
      </VScroll>
      <Pane>
        <ExTable>
          <colgroup><Col /><Col $w={141} /><Col $w={120} /><Col $w={80} /></colgroup>
          <thead><tr><th>Name</th><th>Date modified<Chevron size={8} color="#999" weight={1.2} /></th><th>Type</th><th>Size</th></tr></thead>
          <tbody>
            <tr><GroupCell colSpan={4}><GroupLine /></GroupCell></tr>
            <SelRow><td>malware.zip</td><DateCell>9/12/2024 3:14 PM</DateCell><td>WinRAR ZIP archive</td><td>456 KB</td></SelRow>
            <tr><GroupCell colSpan={4}><GroupLine /></GroupCell></tr>
            {earlier.map(([t, k, s]) => <tr key={t}><td /><DateCell>{t}</DateCell><td>{k}</td><td>{s}</td></tr>)}
          </tbody>
        </ExTable>
        <HScroll><Chevron dir="left" color="#444" weight={2} /><HThumb /><Chevron dir="right" color="#444" weight={2} /></HScroll>
      </Pane>
    </Body>
    <ExStatus>
      <StatusText $w={59}>5 items</StatusText><StatusText $w={85}>1 item selected</StatusText><StatusText>455 KB</StatusText><Spacer />
      <ViewButton $on aria-label="Details view"><Svg><path d="M1.500 1v14M4.500 1v14M1 1.500h4M1 5.500h4M1 10.500h4M1 14.500h4M7 3.500h3M12 3.500h4M7 8h3M12 8h4M7 12.500h3M12 12.500h4" stroke="#55748c" /></Svg></ViewButton>
      <ViewButton aria-label="Thumbnails view"><Svg w={14} h={16} box="0 0 16 16">{navIcons.pictures}</Svg></ViewButton>
    </ExStatus>
  </Explorer>
);

const PasswordDialog = () => (
  <Dialog role="dialog" aria-label="Enter password">
    <DlgTitle><RarIcon />Enter password<Spacer /><CaptionButton $w={30} aria-label="Close"><WinGlyph kind="close" color="#111" /></CaptionButton></DlgTitle>
    <DlgText>Enter password for the encrypted file<br />C:\Users\admin\Downloads\malware\Alien-Romulus.jpg<br />in archive malware.zip</DlgText>
    <Frame>
      <label htmlFor="pw">Enter password</label>
      <Combo><input id="pw" type="password" /><button aria-label="Password history"><Chevron color="#555" /></button></Combo>
      <Check $top={63}><input type="checkbox" />Show password</Check>
      <Check $top={48} $dim><input type="checkbox" disabled />Use for all archives</Check>
      <Organize>Organize passwords...</Organize>
    </Frame>
    <DlgActions><DlgButton $main>OK</DlgButton><DlgButton>Cancel</DlgButton><DlgButton>Help</DlgButton></DlgActions>
  </Dialog>
);

export default function App() {
  return (
    <Screen>
      <Global />
      <Desk>
        <ArchiverWindow />
        <ExplorerWindow />
        <PasswordDialog />
      </Desk>
      <Taskbar>
        <TaskButton $w={48} aria-label="Start"><Svg><path d="M0 2.300L7.300 1.300v6.300H0zM8.200 1.200L16 0v7.600H8.200zM0 8.500h7.300v6.300L0 13.800zM8.200 8.500H16V16l-7.800-1.100z" fill="#fff" /></Svg></TaskButton>
        <TaskSearch><Magnifier size={16} color="#222" weight={1.3} /><input aria-label="Search" placeholder="Type here to search" /><Globe /></TaskSearch>
        <TaskButton $w={50} aria-label="Task view"><Svg w={18} h={16}><path d="M1.500 0v2.500h9V0M1.500 16v-2.500h9V16M1.500 4.500h9v7h-9zM14.500 0v3M14.500 8v8" stroke="#fff" /><rect x="13" y="4" width="3" height="3" fill="#fff" /></Svg></TaskButton>
        <TaskButton $w={50} aria-label="Edge"><EdgeLogo /></TaskButton>
        <TaskButton $w={48} $line={40} aria-label="File Explorer"><ExplorerLogo /></TaskButton>
        <TaskButton $w={50} aria-label="Firefox"><FirefoxLogo /></TaskButton>
        <TaskButton $w={48} $line={48} $on aria-label="WinRAR"><StackLogo /></TaskButton>
        <Spacer />
        <Tray>
          <TrayButton aria-label="Hidden icons"><Chevron dir="up" size={13} color="#fff" weight={1} /></TrayButton>
          <TrayButton aria-label="Camera"><Svg w={14} h={16}><rect x="2.5" y="4.5" width="6" height="7" rx="1.5" stroke="#fff" strokeWidth="1.2" /><path d="M8.500 7l3-2v6l-3-2M3 2q3-2 6 0M3 14q3 2 6 0" stroke="#fff" /></Svg></TrayButton>
          <TrayButton aria-label="Network"><Svg><path d="M5 2.500h10.500v8H4M9.500 10.500V14M6 14.500h7M.5 1.500h4v4h-4zM2.500 5.500v9" stroke="#fff" /></Svg></TrayButton>
          <TrayButton aria-label="Volume"><Svg><path d="M.5 6h2.500l3.500-3.500v11L3 10H.5zM8.500 6q1.500 2 0 4M10.500 4.500q3 3.500 0 7M12.500 2.500q5 5.500 0 11" stroke="#fff" /></Svg></TrayButton>
          <Clock>3:14 PM<br />9/12/2024</Clock>
          <TrayButton $w={40} aria-label="Notifications"><Svg w={18} h={17}><path d="M1.500 1.500h15v11h-5L9 15l-2.500-2.500h-5z" stroke="#fff" /></Svg></TrayButton>
          <TrayButton $w={4} aria-label="Show desktop" />
        </Tray>
        <TrayEdge />
      </Taskbar>
      <Mark aria-hidden="true">
        <span>ANY</span>
        <Svg w={56} h={62}>
          <path d="M14 14V6q0-5 5-2l32 21q6 5 0 10L20 56q-7 4-7-3" stroke="#fff" strokeWidth="4" />
          <path d="M4 14q1-6 5-6v44q-5 1-5-5zM20 20v22l17-11z" stroke="#fff" strokeWidth="3" />
        </Svg>
        <span>RUN</span>
      </Mark>
    </Screen>
  );
}
